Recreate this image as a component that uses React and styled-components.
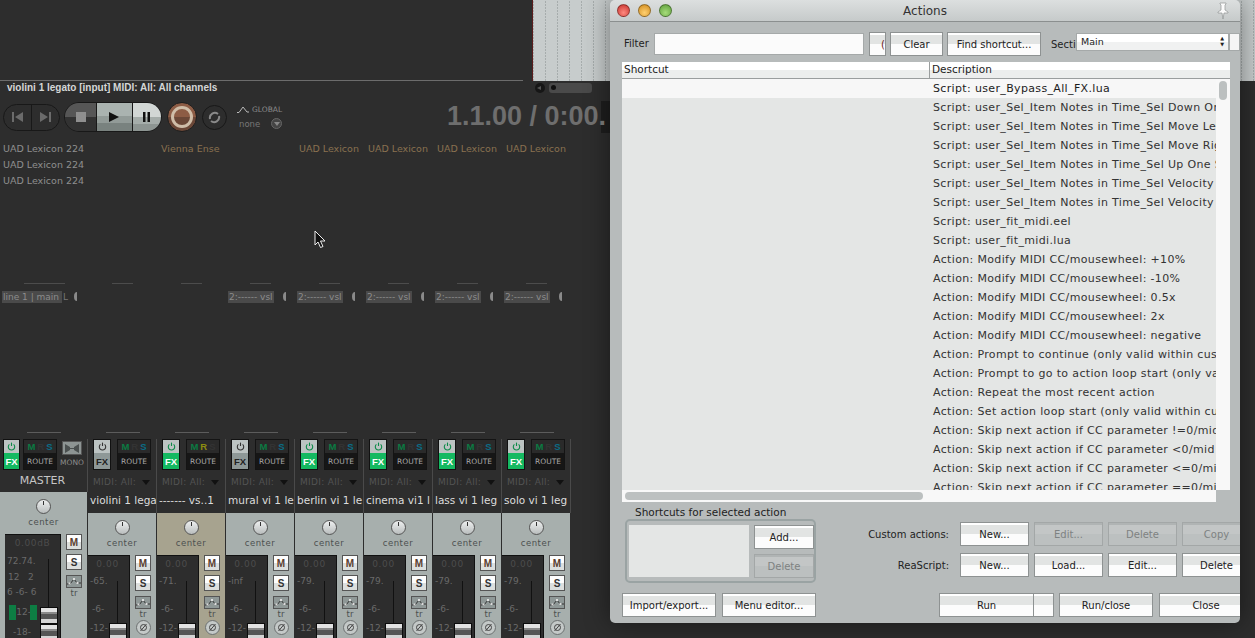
import React from 'react';
import styled, { createGlobalStyle, css } from 'styled-components';

const Global = createGlobalStyle`
  html, body { margin: 0; padding: 0; background: #2d2d2d; }
  body { font-family: "DejaVu Sans", "Liberation Sans", sans-serif; }
  * { box-sizing: border-box; }
`;

const Screen = styled.div`
  position: relative;
  width: 1255px;
  height: 638px;
  overflow: hidden;
  background: #2d2d2d;
`;

const Daw = styled.div`
  display: flex;
  flex-direction: column;
  height: 638px;
`;

const TopRow = styled.div`
  display: flex;
  height: 81px;
  flex: none;
`;

const TopLeft = styled.div`
  width: 523px;
  height: 81px;
  margin-right: 9px;
  border-bottom: 1px solid #6c6c6c;
`;

const Arrange = styled.div`
  flex: 1;
  border-left: 1px solid #5a1c1c;
  background:
    linear-gradient(#c7cccc 50%, transparent 50%) 0 0 / 100% 3px,
    repeating-linear-gradient(90deg, #a6acac 0 1px, #c7cccc 1px 12px);
`;

const InfoRow = styled.div`
  display: flex;
  align-items: center;
  width: 610px;
  height: 13px;
  padding: 0 0 0 7px;
  flex: none;
`;

const TrackInfo = styled.span`
  font: 700 10px "Liberation Sans", sans-serif;
  color: #d4d6d6;
`;

const ScrollArrow = styled.span`
  display: flex;
  align-items: center;
  justify-content: center;
  width: 10px;
  height: 10px;
  margin-left: auto;
  border-radius: 50%;
  background: #161616;
  &::before {
    content: '';
    border: 2.5px solid transparent;
    border-right: 4px solid #555;
    margin-left: -4px;
  }
`;

const ScrollPill = styled.span`
  display: flex;
  align-items: center;
  width: 43px;
  height: 10px;
  margin: 0 18px 0 4px;
  padding-left: 2px;
  border-radius: 3px;
  background: #4a4a4a;
  &::before {
    content: '';
    width: 5px;
    height: 5px;
    border-radius: 50%;
    background: #111;
  }
`;

const Transport = styled.div`
  display: flex;
  align-items: center;
  height: 32px;
  margin-top: 7px;
  padding-left: 3px;
  width: 610px;
  flex: none;
  overflow: hidden;
`;

const SkipPill = styled.div`
  display: flex;
  width: 57px;
  height: 27px;
  border: 1px solid #181818;
  border-radius: 14px;
  overflow: hidden;
`;

const SkipButton = styled.div`
  flex: 1;
  display: flex;
  align-items: center;
  justify-content: center;
  & + & { border-left: 1px solid #181818; }
`;

const PlayGroup = styled.div`
  display: flex;
  width: 98px;
  height: 30px;
  margin-left: 4px;
  border-radius: 15px;
  overflow: hidden;
  border: 1px solid #181818;
`;

const PlayPart = styled.div`
  display: flex;
  align-items: center;
  justify-content: center;
  width: ${(p) => p.$w}px;
  background: ${(p) => p.$bg};
  & + & { border-left: 1px solid #181818; }
`;

const RecordButton = styled.div`
  display: flex;
  align-items: center;
  justify-content: center;
  width: 30px;
  height: 30px;
  margin-left: 5px;
  border-radius: 50%;
  background: linear-gradient(#8d5c45 50%, #6b4737 50%);
  border: 1px solid #1e1e1e;
  &::before {
    content: '';
    width: 16px;
    height: 16px;
    border-radius: 50%;
    border: 3px solid #cfbda8;
  }
`;

const LoopButton = styled.div`
  display: flex;
  align-items: center;
  justify-content: center;
  width: 25px;
  height: 25px;
  margin-left: 5px;
  border-radius: 50%;
  border: 1px solid #181818;
`;

const GlobalBox = styled.div`
  display: flex;
  flex-direction: column;
  width: 50px;
  margin-left: 10px;
  gap: 4px;
`;

const GlobalLine = styled.div`
  display: flex;
  align-items: center;
  gap: 3px;
  font-size: 7.5px;
  color: #8b8b8b;
`;

const NoneText = styled.span`
  margin-left: 2px;
  width: 29px;
  font-size: 8.5px;
  color: #777;
`;

const NoneCircle = styled.span`
  display: flex;
  align-items: center;
  justify-content: center;
  width: 11px;
  height: 11px;
  border-radius: 50%;
  border: 1px solid #666;
  background: #444;
  &::before {
    content: '';
    border: 3px solid transparent;
    border-top: 4px solid #888;
    margin-top: 3px;
  }
`;

const TimeText = styled.span`
  position: relative;
  z-index: 1;
  margin-left: auto;
  margin-right: -5px;
  margin-top: -1px;
  flex: none;
  width: 159px;
  white-space: nowrap;
  overflow: hidden;
  font: 700 27px "Liberation Sans", sans-serif;
  color: #6e6e6e;
`;

const TimeEdge = styled.span`
  width: 9px;
  height: 32px;
  flex: none;
  background: #1e1e1e;
`;

const FxGrid = styled.div`
  display: grid;
  grid-template-columns: 88px repeat(7, 69px);
  grid-auto-rows: 16px;
  margin-top: 8px;
  flex: none;
  font-size: 9.5px;
  line-height: 16px;
`;

const FxCell = styled.div`
  white-space: nowrap;
  padding-left: ${(p) => (p.$col0 ? 3 : 4)}px;
  color: ${(p) => p.$color};
  grid-column: ${(p) => p.$col};
  grid-row: ${(p) => p.$row};
`;

const SendGrid = styled.div`
  display: grid;
  grid-template-columns: 88px repeat(7, 69px);
  margin-top: 94px;
  flex: none;
`;

const SendCell = styled.div`
  display: flex;
  flex-direction: column;
  align-items: flex-start;
`;

const SendLine = styled.div`
  align-self: center;
  width: ${(p) => (p.$master ? 41 : 21)}px;
  height: 1px;
  background: #4c4c4c;
`;

const SendRow = styled.div`
  display: flex;
  align-items: center;
  margin-top: 6px;
  padding-left: 2px;
  height: 13px;
`;

const SendTag = styled.span`
  width: ${(p) => (p.$master ? 60 : 46)}px;
  height: 12px;
  background: #4a4a4a;
  font-size: 9px;
  line-height: 12px;
  color: #8c8c8c;
  padding-left: 1px;
  white-space: nowrap;
  overflow: hidden;
`;

const SendExtra = styled.span`
  font-size: 9px;
  color: #777;
  margin-left: 1px;
  width: ${(p) => (p.$master ? 11 : 8)}px;
`;

const Moon = styled.span`
  width: 6px;
  height: 9px;
  border-left: 3px solid #8a8a8a;
  border-radius: 50%;
`;

const Mixer = styled.div`
  display: flex;
  margin-top: auto;
  height: 206px;
  flex: none;
`;

const Strip = styled.div`
  position: relative;
  display: flex;
  flex-direction: column;
  width: ${(p) => (p.$master ? 88 : 69)}px;
  flex: none;
`;

const TopLine = styled.div`
  align-self: center;
  width: 34px;
  height: 1px;
  margin-bottom: 6px;
  background: #5c5c5c;
`;

const StripHead = styled.div`
  display: flex;
  height: ${(p) => (p.$master ? 53 : 74)}px;
  flex-direction: column;
  border-right: 1px solid #4a4a4a;
`;

const ButtonRow = styled.div`
  display: flex;
  align-items: flex-start;
  height: 33px;
  padding-left: ${(p) => (p.$master ? 3 : 5)}px;
  gap: ${(p) => (p.$master ? 3 : 6)}px;
  flex: none;
`;

const FxButton = styled.div`
  display: flex;
  flex-direction: column;
  width: ${(p) => (p.$master ? 17 : 18)}px;
  height: 31px;
  border: 1px solid #111;
  flex: none;
`;

const PowerPart = styled.div`
  display: flex;
  align-items: center;
  justify-content: center;
  height: 13px;
  background: #bcc3c2;
`;

const FxPart = styled.div`
  flex: 1;
  display: flex;
  align-items: center;
  justify-content: center;
  background: ${(p) => (p.$on ? '#14b961' : '#8e9897')};
  color: ${(p) => (p.$on ? '#fff' : '#222')};
  font: 700 9.5px "Liberation Sans", sans-serif;
`;

const RouteBox = styled.div`
  display: flex;
  flex-direction: column;
  width: 34px;
  height: 31px;
  background: #161616;
  border: 1px solid #141414;
  flex: none;
`;

const MrsRow = styled.div`
  display: flex;
  align-items: center;
  justify-content: center;
  gap: 2px;
  height: 13px;
  background: #2a2a2a;
  font: 700 9.5px "Liberation Sans", sans-serif;
`;

const MrsLetter = styled.span`
  color: ${(p) => p.$color};
`;

const RouteText = styled.div`
  flex: 1;
  display: flex;
  align-items: center;
  justify-content: center;
  font-size: 7.5px;
  color: #a9a9a9;
`;

const MonoBox = styled.div`
  display: flex;
  flex-direction: column;
  align-items: center;
  width: 20px;
  margin-left: 2px;
  gap: 3px;
  padding-top: 2px;
  font-size: 7.5px;
  color: #8c8c8c;
`;

const MonoIcon = styled.div`
  display: flex;
  align-items: center;
  justify-content: center;
  width: 20px;
  height: 14px;
  border: 1px solid #555;
  background: #8d9493;
`;

const MasterTitle = styled.div`
  text-align: center;
  font-size: 11px;
  line-height: 17px;
  color: #c6c6c6;
  padding-right: 2px;
`;

const MidiRow = styled.div`
  display: flex;
  align-items: center;
  justify-content: space-between;
  height: 19px;
  padding: 0 6px 0 5px;
  font-size: 9px;
  letter-spacing: 0.3px;
  color: #535353;
  flex: none;
  &::after {
    content: '';
    border: 4px solid transparent;
    border-top: 5px solid #111;
    margin-top: 5px;
  }
`;

const NameRow = styled.div`
  height: 22px;
  padding-left: 2px;
  font-size: 10.5px;
  line-height: 18px;
  color: #dcdcdc;
  white-space: nowrap;
  overflow: hidden;
  flex: none;
`;

const Panel = styled.div`
  flex: 1;
  display: flex;
  flex-direction: column;
  background: ${(p) => (p.$active ? '#a7a38f' : '#a7afad')};
  ${(p) => p.$master && 'width: 87px;'}
  border-right: ${(p) => (p.$master ? 'none' : '1px solid #2d2d2d')};
`;

const PanBlock = styled.div`
  display: flex;
  flex-direction: column;
  align-items: center;
  height: 42px;
  padding-top: 7px;
  font-size: 8.5px;
  letter-spacing: 0.5px;
  color: #4c5050;
  gap: 3px;
  flex: none;
`;

const Knob = styled.div`
  position: relative;
  width: 15px;
  height: 15px;
  border-radius: 50%;
  background: linear-gradient(#eef0f0, #b9bdbd);
  border: 1px solid #555;
  &::after {
    content: '';
    position: absolute;
    left: 6px;
    top: 1px;
    width: 1px;
    height: 4px;
    background: #333;
  }
`;

const Lower = styled.div`
  flex: 1;
  display: flex;
  min-height: 0;
  ${(p) => p.$master && 'padding-left: 5px;'}
`;

const FaderBox = styled.div`
  position: relative;
  width: ${(p) => (p.$master ? 56 : 42)}px;
  background: #2d2d2d;
  border-top: 1px solid #111;
  border-right: 1px solid #111;
  flex: none;
  overflow: hidden;
`;

const Scale = styled.div`
  display: flex;
  flex-direction: column;
  font-size: 9px;
  color: #6a6a6a;
  height: 100%;
`;

const DbText = styled.div`
  text-align: center;
  height: ${(p) => (p.$master ? 21 : 20)}px;
  padding-top: 3px;
  margin-right: ${(p) => (p.$master ? 0 : 2)}px;
  color: #4c4c4c;
  font-size: 9px;
  letter-spacing: 0.6px;
`;

const ScaleText = styled.div`
  height: ${(p) => p.$h}px;
  padding-left: ${(p) => p.$pad}px;
  white-space: pre;
  line-height: 11px;
`;

const Track = styled.div`
  position: absolute;
  left: ${(p) => p.$x}px;
  top: ${(p) => p.$y}px;
  bottom: 0;
  width: 1px;
  background: #111;
`;

const FaderCap = styled.div`
  position: absolute;
  left: ${(p) => p.$x}px;
  top: ${(p) => p.$y}px;
  width: 18px;
  height: 17px;
  border: 1px solid #0c0c0c;
  background: linear-gradient(#e2e2e2 0 30%, #8a8a8a 30% 40%, #555 40% 75%, #d4d4d4 75%);
`;

const Meter = styled.div`
  position: absolute;
  left: ${(p) => p.$x}px;
  top: 70px;
  width: 7px;
  height: 15px;
  background: #0d7d43;
`;

const SideCol = styled.div`
  display: flex;
  flex: 1;
  flex-direction: column;
  align-items: center;
`;

const SquareBtn = styled.div`
  display: flex;
  align-items: center;
  justify-content: center;
  width: 16px;
  height: 16px;
  margin-bottom: 4px;
  border: 1px solid #555;
  background: linear-gradient(#fdfdfd 50%, #dcdfde 50%);
  font: 700 10px "Liberation Sans", sans-serif;
  color: ${(p) => p.$color || '#333'};
`;

const EnvBtn = styled.div`
  display: flex;
  align-items: center;
  justify-content: center;
  width: 16px;
  height: 13px;
  margin-top: 1px;
  border: 1px solid #555;
  background: #8f9897;
`;

const TrLabel = styled.div`
  font-size: 8.5px;
  line-height: 11px;
  color: #4c5050;
`;

const PhaseBtn = styled.svg`
  display: block;
`;

const Cursor = styled.svg`
  position: absolute;
  left: 314px;
  top: 230px;
`;

/* Actions dialog, floating over the mixer */

const ActionsWindow = styled.div`
  position: absolute;
  left: 610px;
  top: 0;
  width: 630px;
  height: 623px;
  display: flex;
  flex-direction: column;
  background: #b7bbbb;
  border-radius: 5px;
  overflow: hidden;
  box-shadow: 0 0 26px rgba(0, 0, 0, 0.45);
  font: 10.5px "DejaVu Sans", sans-serif;
  color: #222;
`;

const TitleBar = styled.div`
  position: relative;
  display: flex;
  align-items: center;
  justify-content: center;
  height: 22px;
  flex: none;
  background: linear-gradient(#dcdfdf, #c6caca);
  border-bottom: 1px solid #8b8f8f;
  font-size: 12px;
  padding-top: 1px;
  color: #333;
`;

const Lights = styled.div`
  position: absolute;
  left: 7px;
  top: 4px;
  display: flex;
  gap: 8px;
`;

const Light = styled.span`
  width: 13px;
  height: 13px;
  border-radius: 50%;
  border: 1px solid rgba(0, 0, 0, 0.35);
  background: radial-gradient(circle at 50% 70%, ${(p) => p.$a}, ${(p) => p.$b});
`;

const Pin = styled.svg`
  position: absolute;
  right: 11px;
  top: 2px;
`;

const FilterRow = styled.div`
  display: flex;
  align-items: center;
  height: 24px;
  margin: 10px 0 0 14px;
  flex: none;
`;

const FilterLabel = styled.span`
  width: 30px;
  font-size: 10px;
  margin-top: -2px;
`;

const FilterInput = styled.div`
  width: 210px;
  height: 22px;
  background: #fbfbfb;
  border: 1px solid #a5a9a9;
`;

const btnFace = css`
  display: flex;
  align-items: center;
  justify-content: center;
  height: 24px;
  white-space: nowrap;
  flex: none;
  border: 1px solid #8e9292;
  background: linear-gradient(#fff 0 2px, #e2e4e3 2px 50%, #fcfcfc 50%);
  font-size: 10px;
  color: #222;
`;

const Btn = styled.div`
  ${btnFace}
  width: ${(p) => p.$w}px;
  margin-left: ${(p) => p.$ml || 0}px;
  ${(p) =>
    p.$off &&
    css`
      background: linear-gradient(#b0b4b4 0 2px, #c3c6c6 2px 50%, #bcc0c0 50%);
      border-color: #a3a7a7;
      color: #7e8282;
    `}
`;

const StubBtn = styled(Btn)`
  justify-content: flex-end;
  color: #6b1414;
  overflow: hidden;
`;

const SectionLabel = styled.span`
  width: 25px;
  margin-left: 10px;
  overflow: hidden;
  white-space: nowrap;
  font-size: 10px;
`;

const SelectBox = styled.div`
  display: flex;
  align-items: center;
  justify-content: space-between;
  width: 153px;
  height: 18px;
  margin-top: -5px;
  padding: 0 4px 1px;
  background: linear-gradient(#fff 50%, #f0f1f1 50%);
  border: 1px solid #a5a9a9;
  font-size: 9.5px;
`;

const Arrows = styled.span`
  font-size: 5px;
  line-height: 6px;
  text-align: center;
`;

const SelectStub = styled.div`
  flex: 1;
  height: 18px;
  margin-top: -5px;
  background: #f5f5f5;
  border: 1px solid #a5a9a9;
`;

const ListFrame = styled.div`
  display: flex;
  flex-direction: column;
  width: 608px;
  height: 440px;
  margin: 6px 0 0 12px;
  flex: none;
`;

const ListHead = styled.div`
  display: flex;
  height: 17px;
  flex: none;
  background: linear-gradient(#fff 50%, #eceeed 50%);
  border-bottom: 1px solid #9a9e9e;
  font-size: 10.5px;
  line-height: 15px;
`;

const HeadCell = styled.div`
  width: ${(p) => p.$w}px;
  padding-left: 2px;
  ${(p) => p.$w === 308 && 'border-right: 1px solid #9a9e9e;'}
`;

const ListBody = styled.div`
  flex: 1;
  display: flex;
  min-height: 0;
`;

const Rows = styled.div`
  width: 594px;
  overflow: hidden;
  background: #e4e6e5;
`;

const Row = styled.div`
  height: 19px;
  padding-left: 311px;
  line-height: 19px;
  font-size: 11px;
  letter-spacing: 0.35px;
  white-space: nowrap;
  overflow: hidden;
  color: ${(p) => (p.$sel ? '#1c1c1c' : '#333')};
  background: ${(p) => (p.$sel ? '#f7f7f7' : 'transparent')};
`;

const VScroll = styled.div`
  width: 14px;
  background: #f8f8f8;
  padding: 2px 3px;
`;

const VThumb = styled.div`
  height: 19px;
  border-radius: 4px;
  background: #bcc0c0;
`;

const HScroll = styled.div`
  width: 594px;
  height: 12px;
  flex: none;
  background: #f8f8f8;
  padding: 2px 3px;
`;

const HThumb = styled.div`
  width: 298px;
  height: 8px;
  border-radius: 4px;
  background: #bcc0c0;
`;

const MiddleArea = styled.div`
  display: flex;
  height: 81px;
  flex: none;
`;

const ShortcutsBlock = styled.div`
  display: flex;
  flex-direction: column;
  width: 192px;
  margin-left: 15px;
`;

const GroupTitle = styled.div`
  font-size: 10.5px;
  line-height: 14px;
  margin: 3px 0 0 10px;
`;

const GroupBox = styled.div`
  display: flex;
  gap: 5px;
  height: 64px;
  padding: 4px 0 4px 2px;
  border: 2px solid #9aa3a3;
  border-radius: 5px;
`;

const GroupList = styled.div`
  width: 120px;
  background: #e4e6e5;
  flex: none;
`;

const GroupBtns = styled.div`
  display: flex;
  flex-direction: column;
  gap: 5px;
`;

const CustomBlock = styled.div`
  display: flex;
  flex-direction: column;
  gap: 7px;
  margin: 20px 0 0 29px;
`;

const CustomRow = styled.div`
  display: flex;
  align-items: center;
  gap: 5px;
`;

const CustomLabel = styled.span`
  width: 104px;
  margin-right: 6px;
  text-align: right;
  font-size: 10px;
`;

const FooterRow = styled.div`
  display: flex;
  gap: 6px;
  margin: 10px 0 0 12px;
  flex: none;
`;

const RunSplit = styled.div`
  display: flex;
  margin-left: 117px;
  margin-right: -1px;
`;

const Power = ({ on }) => (
  <svg width="9" height="9" viewBox="0 0 9 9" fill="none" stroke={on ? '#0c8a48' : '#333'} strokeWidth="1.1">
    <path d="M2.4 2.4a3.2 3.2 0 1 0 4.2 0" />
    <path d="M4.5 0.6v3.4" />
  </svg>
);

const EnvIcon = ({ color = '#333' }) => (
  <svg width="14" height="9" viewBox="0 0 14 9" fill="none" stroke={color} strokeWidth="1">
    <path d="M0 7h3l4-5 3 4h4" />
    <rect x="1.5" y="5.5" width="2" height="2" fill="#ddd" stroke="none" />
    <rect x="6" y="1" width="2" height="2" fill="#ddd" stroke="none" />
    <rect x="9.5" y="5" width="2" height="2" fill="#ddd" stroke="none" />
  </svg>
);

const PhaseIcon = () => (
  <PhaseBtn width="15" height="15" viewBox="0 0 15 15" fill="none">
    <circle cx="7.5" cy="7.5" r="7" fill="#c4c9c8" stroke="#6c7070" />
    <circle cx="7.5" cy="7.5" r="3" stroke="#444" />
    <path d="M4.5 11l6-7" stroke="#444" />
  </PhaseBtn>
);

const LOWER_STRIPS = [
  { name: 'violini 1 lega', peak: '-65.', on: false, r: '#333', s: '#0b6d86' },
  { name: '------- vs..1', peak: '-71.', on: true, r: '#8c8c10', s: '#333', active: true },
  { name: 'mural vi 1 le', peak: '-inf', on: false, r: '#333', s: '#0b6d86' },
  { name: 'berlin vi 1 le', peak: '-79.', on: true, r: '#333', s: '#0b6d86' },
  { name: 'cinema vi1 l', peak: '-79.', on: true, r: '#333', s: '#0b6d86' },
  { name: 'lass vi 1 leg', peak: '-79.', on: true, r: '#333', s: '#0b6d86' },
  { name: 'solo vi 1 leg', peak: '-79.', on: true, r: '#333', s: '#0b6d86' },
];

const ACTION_ROWS = [
  'Script: user_Bypass_All_FX.lua',
  'Script: user_Sel_Item Notes in Time_Sel Down One Semitone',
  'Script: user_Sel_Item Notes in Time_Sel Move Left',
  'Script: user_Sel_Item Notes in Time_Sel Move Right',
  'Script: user_Sel_Item Notes in Time_Sel Up One Semitone',
  'Script: user_Sel_Item Notes in Time_Sel Velocity (+)',
  'Script: user_Sel_Item Notes in Time_Sel Velocity (-)',
  'Script: user_fit_midi.eel',
  'Script: user_fit_midi.lua',
  'Action: Modify MIDI CC/mousewheel: +10%',
  'Action: Modify MIDI CC/mousewheel: -10%',
  'Action: Modify MIDI CC/mousewheel: 0.5x',
  'Action: Modify MIDI CC/mousewheel: 2x',
  'Action: Modify MIDI CC/mousewheel: negative',
  'Action: Prompt to continue (only valid within custom actions)',
  'Action: Prompt to go to action loop start (only valid within custom actions)',
  'Action: Repeat the most recent action',
  'Action: Set action loop start (only valid within custom actions)',
  'Action: Skip next action if CC parameter !=0/mid',
  'Action: Skip next action if CC parameter <0/mid',
  'Action: Skip next action if CC parameter <=0/mid',
  'Action: Skip next action if CC parameter ==0/mid',
];

const FX_CELLS = [
  { col: 1, row: 1, text: 'UAD Lexicon 224', color: '#8f8f8f', col0: true },
  { col: 1, row: 2, text: 'UAD Lexicon 224', color: '#8f8f8f', col0: true },
  { col: 1, row: 3, text: 'UAD Lexicon 224', color: '#8f8f8f', col0: true },
  { col: 3, row: 1, text: 'Vienna Ense', color: '#8a7150' },
  { col: 5, row: 1, text: 'UAD Lexicon', color: '#8a7150' },
  { col: 6, row: 1, text: 'UAD Lexicon', color: '#8a7150' },
  { col: 7, row: 1, text: 'UAD Lexicon', color: '#8a7150' },
  { col: 8, row: 1, text: 'UAD Lexicon', color: '#8a7150' },
];

const SEND_CELLS = [
  { tag: 'line 1 | main', extra: 'L', master: true },
  {},
  {},
  { tag: '2:------ vsl' },
  { tag: '2:------ vsl' },
  { tag: '2:------ vsl' },
  { tag: '2:------ vsl' },
  { tag: '2:------ vsl' },
];

const MixerStrip = ({ strip }) => (
  <Strip>
    <TopLine />
    <StripHead>
      <ButtonRow>
        <FxButton>
          <PowerPart><Power on={strip.on} /></PowerPart>
          <FxPart $on={strip.on}>FX</FxPart>
        </FxButton>
        <RouteBox>
          <MrsRow>
            <MrsLetter $color="#0b7a43">M</MrsLetter>
            <MrsLetter $color={strip.r}>R</MrsLetter>
            <MrsLetter $color={strip.s}>S</MrsLetter>
          </MrsRow>
          <RouteText>ROUTE</RouteText>
        </RouteBox>
      </ButtonRow>
      <MidiRow>MIDI: All:</MidiRow>
      <NameRow>{strip.name}</NameRow>
    </StripHead>
    <Panel $active={strip.active}>
      <PanBlock>
        <Knob />
        center
      </PanBlock>
      <Lower>
        <FaderBox>
          <Scale>
            <DbText>0.00</DbText>
            <ScaleText $h={28} $pad={2}>{strip.peak}</ScaleText>
            <ScaleText $h={19} $pad={4}>-6-</ScaleText>
            <ScaleText $h={11} $pad={2}>-12-</ScaleText>
          </Scale>
          <Track $x={29} $y={25} />
          <FaderCap $x={21} $y={67} />
        </FaderBox>
        <SideCol>
          <SquareBtn $color="#5a3d30">M</SquareBtn>
          <SquareBtn>S</SquareBtn>
          <EnvBtn><EnvIcon /></EnvBtn>
          <TrLabel>tr</TrLabel>
          <PhaseIcon />
        </SideCol>
      </Lower>
    </Panel>
  </Strip>
);

const MasterStrip = () => (
  <Strip $master>
    <TopLine />
    <StripHead $master>
      <ButtonRow $master>
        <FxButton $master>
          <PowerPart><Power on /></PowerPart>
          <FxPart $on>FX</FxPart>
        </FxButton>
        <RouteBox>
          <MrsRow>
            <MrsLetter $color="#0b7a43">M</MrsLetter>
            <MrsLetter $color="#333">R</MrsLetter>
            <MrsLetter $color="#0b6d86">S</MrsLetter>
          </MrsRow>
          <RouteText>ROUTE</RouteText>
        </RouteBox>
        <MonoBox>
          <MonoIcon>
            <svg width="14" height="9" viewBox="0 0 14 9" fill="#4a4f4f">
              <path d="M0 0l5 3v3l-5 3zM14 0l-5 3v3l5 3zM5 4h4v1H5z" />
            </svg>
          </MonoIcon>
          MONO
        </MonoBox>
      </ButtonRow>
      <MasterTitle>MASTER</MasterTitle>
    </StripHead>
    <Panel $master>
      <PanBlock>
        <Knob />
        center
      </PanBlock>
      <Lower $master>
        <FaderBox $master>
          <Scale>
            <DbText $master>0.00dB</DbText>
            <ScaleText $h={16} $pad={2}>72.74.</ScaleText>
            <ScaleText $h={15} $pad={3}>{'12   2'}</ScaleText>
            <ScaleText $h={20} $pad={2}>{'6 -6- 6'}</ScaleText>
            <ScaleText $h={20} $pad={8}>-12-</ScaleText>
            <ScaleText $h={11} $pad={8}>-18-</ScaleText>
          </Scale>
          <Meter $x={4} />
          <Meter $x={25} />
          <Track $x={43} $y={24} />
          <FaderCap $x={35} $y={72} />
          <FaderCap $x={35} $y={89} />
        </FaderBox>
        <SideCol $master>
          <SquareBtn $color="#5a3d30">M</SquareBtn>
          <SquareBtn>S</SquareBtn>
          <EnvBtn><EnvIcon /></EnvBtn>
          <TrLabel>tr</TrLabel>
        </SideCol>
      </Lower>
    </Panel>
  </Strip>
);

const App = () => (
  <Screen>
    <Global />
    <Daw>
      <TopRow>
        <TopLeft />
        <Arrange />
      </TopRow>
      <InfoRow>
        <TrackInfo>violini 1 legato [input] MIDI: All: All channels</TrackInfo>
        <ScrollArrow />
        <ScrollPill />
      </InfoRow>
      <Transport>
        <SkipPill>
          <SkipButton>
            <svg width="11" height="10" viewBox="0 0 11 10" fill="#6b6b6b"><path d="M0 0h2v10H0zM11 0v10L3 5z" /></svg>
          </SkipButton>
          <SkipButton>
            <svg width="11" height="10" viewBox="0 0 11 10" fill="#6b6b6b"><path d="M9 0h2v10H9zM0 0v10l8-5z" /></svg>
          </SkipButton>
        </SkipPill>
        <PlayGroup>
          <PlayPart $w={32} $bg="linear-gradient(#565656 50%, #323232 50%)">
            <svg width="10" height="10" viewBox="0 0 10 10" fill="#8f8f8f"><path d="M0 0h10v10H0z" /></svg>
          </PlayPart>
          <PlayPart $w={36} $bg="linear-gradient(#aab3b0 0 45%, #929b98 45% 70%, #79827f 70%)">
            <svg width="10" height="10" viewBox="0 0 10 10" fill="#111"><path d="M0 0l10 5-10 5z" /></svg>
          </PlayPart>
          <PlayPart $w={30} $bg="linear-gradient(#d2d7d5 0 50%, #a5adaa 50% 75%, #8d9592 75%)">
            <svg width="7" height="10" viewBox="0 0 7 10" fill="#111"><path d="M0 0h2.5v10H0zM4.5 0H7v10H4.5z" /></svg>
          </PlayPart>
        </PlayGroup>
        <RecordButton />
        <LoopButton>
          <svg width="13" height="13" viewBox="0 0 13 13" fill="none" stroke="#8a8a8a" strokeWidth="2">
            <path d="M2 8a5 5 0 0 1 8-5M11 5a5 5 0 0 1-8 5" />
          </svg>
        </LoopButton>
        <GlobalBox>
          <GlobalLine>
            <svg width="12" height="7" viewBox="0 0 12 7" fill="none" stroke="#bbb" strokeWidth="1">
              <path d="M0 6.5h2L6 1l4 5h2" />
            </svg>
            GLOBAL
          </GlobalLine>
          <GlobalLine>
            <NoneText>none</NoneText>
            <NoneCircle />
          </GlobalLine>
        </GlobalBox>
        <TimeText>1.1.00 / 0:00.000</TimeText>
        <TimeEdge />
      </Transport>
      <FxGrid>
        {FX_CELLS.map((c, i) => (
          <FxCell key={i} $col={c.col} $row={c.row} $color={c.color} $col0={c.col0}>{c.text}</FxCell>
        ))}
      </FxGrid>
      <SendGrid>
        {SEND_CELLS.map((c, i) => (
          <SendCell key={i}>
            <SendLine $master={c.master} />
            {c.tag && (
              <SendRow>
                <SendTag $master={c.master}>{c.tag}</SendTag>
                <SendExtra $master={c.master}>{c.extra}</SendExtra>
                <Moon />
              </SendRow>
            )}
          </SendCell>
        ))}
      </SendGrid>
      <Mixer>
        <MasterStrip />
        {LOWER_STRIPS.map((s) => <MixerStrip key={s.name} strip={s} />)}
      </Mixer>
    </Daw>

    <Cursor width="12" height="19" viewBox="0 0 12 19">
      <path d="M1 1v14l3-3 2.5 5.5 2.5-1L6.5 11H11z" fill="#111" stroke="#eee" strokeWidth="1" />
    </Cursor>

    <ActionsWindow>
      <TitleBar>
        <Lights>
          <Light $a="#ff8a80" $b="#c62f2a" />
          <Light $a="#ffd070" $b="#d08a1c" />
          <Light $a="#a6dc7a" $b="#5c9e3a" />
        </Lights>
        Actions
        <Pin width="12" height="18" viewBox="0 0 12 18" fill="#fbfbfb" stroke="#8f9393" strokeWidth="0.7">
          <path d="M3 1h6v1L8 3v5l3 2v1H7l-1 6-1-6H1v-1l3-2V3L3 2z" />
        </Pin>
      </TitleBar>
      <FilterRow>
        <FilterLabel>Filter</FilterLabel>
        <FilterInput />
        <StubBtn $w={17} $ml={5}>(</StubBtn>
        <Btn $w={53} $ml={4}>Clear</Btn>
        <Btn $w={94} $ml={4}>Find shortcut...</Btn>
        <SectionLabel>Section:</SectionLabel>
        <SelectBox>
          Main
          <Arrows>▲<br />▼</Arrows>
        </SelectBox>
        <SelectStub />
      </FilterRow>
      <ListFrame>
        <ListHead>
          <HeadCell $w={308}>Shortcut</HeadCell>
          <HeadCell $w={290}>Description</HeadCell>
        </ListHead>
        <ListBody>
          <Rows>
            {ACTION_ROWS.map((text, i) => (
              <Row key={i} $sel={i === 0}>{text}</Row>
            ))}
          </Rows>
          <VScroll><VThumb /></VScroll>
        </ListBody>
        <HScroll><HThumb /></HScroll>
      </ListFrame>
      <MiddleArea>
        <ShortcutsBlock>
          <GroupTitle>Shortcuts for selected action</GroupTitle>
          <GroupBox>
            <GroupList />
            <GroupBtns>
              <Btn $w={60}>Add...</Btn>
              <Btn $w={60} $off>Delete</Btn>
            </GroupBtns>
          </GroupBox>
        </ShortcutsBlock>
        <CustomBlock>
          <CustomRow>
            <CustomLabel>Custom actions:</CustomLabel>
            <Btn $w={69}>New...</Btn>
            <Btn $w={69} $off>Edit...</Btn>
            <Btn $w={69} $off>Delete</Btn>
            <Btn $w={69} $off>Copy</Btn>
          </CustomRow>
          <CustomRow>
            <CustomLabel>ReaScript:</CustomLabel>
            <Btn $w={69}>New...</Btn>
            <Btn $w={69}>Load...</Btn>
            <Btn $w={69}>Edit...</Btn>
            <Btn $w={69}>Delete</Btn>
          </CustomRow>
        </CustomBlock>
      </MiddleArea>
      <FooterRow>
        <Btn $w={94}>Import/export...</Btn>
        <Btn $w={94}>Menu editor...</Btn>
        <RunSplit>
          <Btn $w={95}>Run</Btn>
          <Btn $w={21} $ml={-1} />
        </RunSplit>
        <Btn $w={94}>Run/close</Btn>
        <Btn $w={94}>Close</Btn>
      </FooterRow>
    </ActionsWindow>
  </Screen>
);

export default App;
